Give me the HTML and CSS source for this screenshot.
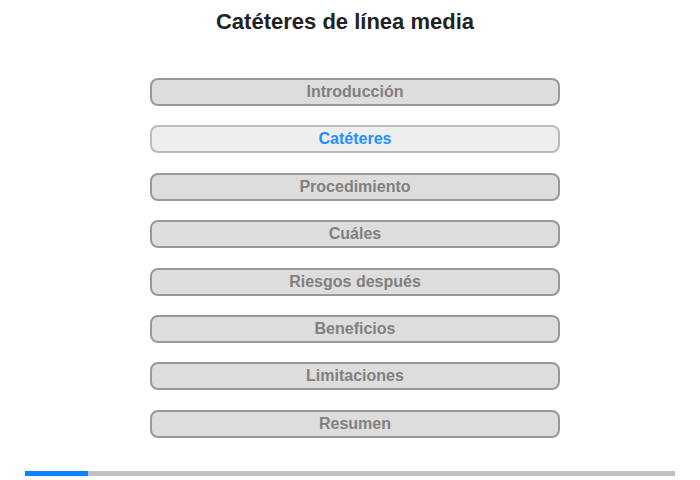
FILE: index.html
```html
<!DOCTYPE html>
<html lang="es">
<head>
  <meta charset="UTF-8">
  <title>Catéteres de línea media</title>
  <link rel="stylesheet" href="styles.css">
</head>
<body>

  <div class="page">
    <h1 class="title">Catéteres de línea media</h1>

    <div class="menu">
      <button class="item">Introducción</button>
      <button class="item active">Catéteres</button>
      <button class="item">Procedimiento</button>
      <button class="item">Cuáles</button>
      <button class="item">Riesgos después</button>
      <button class="item">Beneficios</button>
      <button class="item">Limitaciones</button>
      <button class="item">Resumen</button>
    </div>

    <div class="progress">
      <div class="progress-fill" style="width: 63px"></div>
    </div>
  </div>

</body>
</html>
```

FILE: styles.css
```css
body {
  margin: 0;
  background: #fff;
  font-family: "Liberation Sans", Arial, sans-serif;
}

.page {
  width: 700px;
  height: 480px;
  display: flex;
  flex-direction: column;
}

.title {
  margin: 0;
  padding: 9px 10px 0 0;
  height: 36px;
  font-size: 22px;
  line-height: 26px;
  font-weight: bold;
  color: #222;
  text-align: center;
}

.menu {
  margin: 33px 0 0 150px;
  width: 410px;
  display: flex;
  flex-direction: column;
  gap: 19.4px;
}

.item {
  height: 28px;
  padding: 0;
  background: #dddddd;
  border: 2px solid #999;
  border-radius: 8px;
  font-family: "Liberation Sans", Arial, sans-serif;
  font-size: 16px;
  font-weight: bold;
  color: #808080;
  cursor: pointer;
}

.item.active {
  background: #eeeeee;
  border-color: #bbb;
  color: #1e90ff;
}

.progress {
  margin: auto 0 4px 25px;
  width: 650px;
  height: 5px;
  background: #c0c0c0;
}

.progress-fill {
  height: 100%;
  background: #0a84ff;
}
```
